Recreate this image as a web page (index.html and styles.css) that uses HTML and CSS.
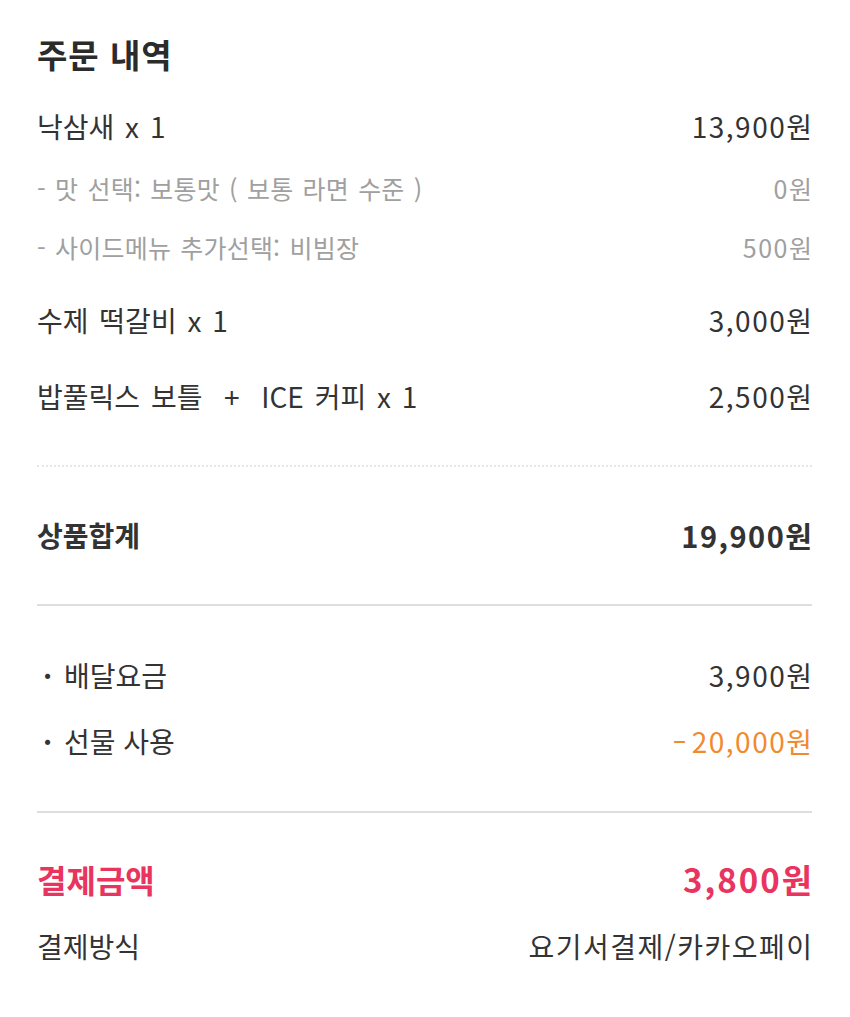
FILE: index.html
```html
<!DOCTYPE html>
<html lang="ko">
<head>
<meta charset="utf-8">
<link rel="stylesheet" href="styles.css">
</head>
<body>
<main class="page">
  <h1 class="title">주문 내역</h1>

  <section class="section items">
    <div class="row item">
      <span class="label">낙삼새 x 1</span>
      <span class="amount">13,900원</span>
    </div>
    <div class="row option">
      <span class="label">- 맛 선택: 보통맛 ( 보통 라면 수준 )</span>
      <span class="amount">0원</span>
    </div>
    <div class="row option">
      <span class="label">- 사이드메뉴 추가선택: 비빔장</span>
      <span class="amount">500원</span>
    </div>
    <div class="row item">
      <span class="label">수제 떡갈비 x 1</span>
      <span class="amount">3,000원</span>
    </div>
    <div class="row item">
      <span class="label">밥풀릭스 보틀 &nbsp;+&nbsp; ICE 커피 x 1</span>
      <span class="amount">2,500원</span>
    </div>
  </section>

  <section class="section subtotal">
    <div class="row strong">
      <span class="label">상품합계</span>
      <span class="amount">19,900원</span>
    </div>
  </section>

  <section class="section fees">
    <div class="row fee">
      <span class="label"><span class="dot">·</span>배달요금</span>
      <span class="amount">3,900원</span>
    </div>
    <div class="row fee">
      <span class="label"><span class="dot">·</span>선물 사용</span>
      <span class="amount discount"><span class="minus">-</span>20,000원</span>
    </div>
  </section>

  <section class="section total">
    <div class="row grand">
      <span class="label">결제금액</span>
      <span class="amount">3,800원</span>
    </div>
    <div class="row method">
      <span class="label">결제방식</span>
      <span class="amount">요기서결제/카카오페이</span>
    </div>
  </section>
</main>
</body>
</html>
```

FILE: styles.css
```css
* {
  box-sizing: border-box;
}

body {
  margin: 0;
  background: #ffffff;
  font-family: "Noto Sans CJK KR", "Noto Sans", sans-serif;
  color: #333333;
}

.page {
  width: 850px;
  padding: 0 38px 0 37px;
}

.title {
  margin: 0;
  height: 108px;
  display: flex;
  align-items: center;
  font-size: 33px;
  font-weight: 700;
  letter-spacing: 1px;
  color: #2b2b2b;
}

.row {
  display: flex;
  justify-content: space-between;
  align-items: center;
  height: 36px;
  white-space: nowrap;
}

.label {
  display: flex;
  align-items: center;
  white-space: pre;
}

.amount {
  letter-spacing: 1.5px;
  margin-right: -1.5px;
}

.items {
  padding-bottom: 51px;
  border-bottom: 2px dotted #e6e6e6;
}

.item {
  font-size: 28px;
  color: #333333;
}

.item .label {
  word-spacing: 3px;
}

.item .amount {
  font-size: 28px;
}

.item + .item {
  margin-top: 40px;
}

.option + .item {
  margin-top: 37px;
}

.option {
  font-size: 25px;
  color: #a0a0a0;
  margin-top: 26px;
}

.option .label {
  word-spacing: 2px;
  letter-spacing: 0.2px;
}

.option + .option {
  margin-top: 23px;
}

.option .amount {
  font-size: 25px;
}

.subtotal {
  padding: 50px 0 51px;
  border-bottom: 2px solid #dedede;
}

.strong {
  font-size: 28px;
  font-weight: 700;
  color: #333333;
}

.strong .amount {
  font-size: 29px;
}

.fees {
  padding: 51px 0 52px;
  border-bottom: 2px solid #dedede;
}

.fee {
  font-size: 28px;
}

.fee .amount {
  font-size: 28px;
}

.fee + .fee {
  margin-top: 30px;
}

.dot {
  width: 21px;
  margin-left: 6px;
  font-weight: 700;
}

.discount {
  color: #f08a2e;
}

.minus {
  display: inline-block;
  transform: scaleX(1.5);
  margin: 0 5px 0 2px;
}

.total {
  padding-top: 46px;
}

.grand {
  height: 40px;
  font-size: 32px;
  font-weight: 700;
  color: #e8345e;
}

.grand .amount {
  font-size: 33px;
  letter-spacing: 2px;
  margin-right: -2px;
}

.method {
  margin-top: 29px;
  font-size: 28px;
}

.method .amount {
  letter-spacing: 1.5px;
}
```
